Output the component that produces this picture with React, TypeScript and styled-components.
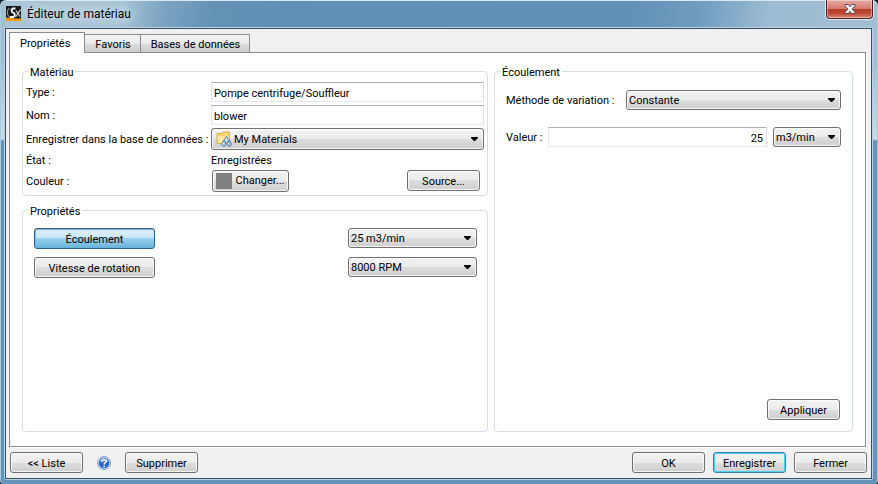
import React, { useState } from "react";
import styled, { createGlobalStyle, css } from "styled-components";

const FONT = `Tahoma, Roboto, "Liberation Sans", sans-serif`;

const GlobalStyle = createGlobalStyle`
  *, *::before, *::after { box-sizing: border-box; }
  body { margin: 0; background: #16283a; color: #000; font: 11px/14px ${FONT}; }
  button, input, select { font: inherit; color: inherit; margin: 0; }
`;

const Window = styled.div`
  min-height: 100vh;
  display: flex;
  flex-direction: column;
  padding: 0 5px 4px 4px;
  border-radius: 6px 6px 4px 4px;
  box-shadow: inset 0 1px 0 #dbe8f0, inset 1px 0 0 #a9cbe0, inset -1px 0 0 #a9cbe0;
  background:
    linear-gradient(180deg, #a5c0d3 0, #a0bfd4 60px, #c9dce8 139px, #6593b7 141px, #6593b7 100%) left / 5px 100% no-repeat,
    linear-gradient(180deg, #a3c0d4 0, #a0bfd4 60px, #c9dce8 139px, #6593b7 141px, #6593b7 100%) right / 6px 100% no-repeat,
    linear-gradient(100deg, #a9c4d6 0, #a9c5d8 120px, #7ea5c2 160px, #6492b5 210px, #6090b5 280px, #6291b6 calc(100% - 250px), #6f9cbe calc(100% - 180px), #9dbbd2 calc(100% - 110px), #a3bfd3 100%) top / 100% 30px no-repeat,
    #6593b7;
`;

const TitleBar = styled.header`
  display: flex;
  align-items: flex-start;
  height: 27px;
  padding-left: 2px;
`;

const Title = styled.h1`
  margin: 6px 0 0 6px;
  font-size: 12px;
  line-height: 16px;
  font-weight: 400;
  flex: 1;
  text-shadow: 0 0 8px #d5e4ee, 0 0 10px #d5e4ee, 0 0 12px #c5d9e6;
`;

const AppIcon = styled.svg`
  margin-top: 6px;
  width: 15px;
  height: 15px;
`;

const CloseButton = styled.button`
  width: 47px;
  height: 19px;
  padding: 0;
  display: grid;
  place-items: center;
  border: 1px solid #4b1d1f;
  border-top: 0;
  border-radius: 0 0 4px 4px;
  background: linear-gradient(180deg, #e3aaa1 0, #d3796c 50%, #b93a26 50%, #bf4a35 75%, #d98a78 100%);
  box-shadow: inset 0 0 0 1px #ffffff66, 0 1px 0 #dfeaf1, 1px 0 0 #dfeaf1, -1px 0 0 #dfeaf1;
`;

const Client = styled.main`
  flex: 1;
  display: flex;
  flex-direction: column;
  border: 1px solid #b5d3e5;
  border-radius: 2px;
`;

const ClientBody = styled.div`
  flex: 1;
  display: flex;
  flex-direction: column;
  border: 1px solid #3a4e63;
  background: #f0f0f0;
  padding: 3px 4px 5px;
`;

const TabList = styled.div`
  display: flex;
  align-items: flex-end;
  margin-left: -1px;
  height: 20px;
`;

const Tab = styled.button<{ $active: boolean }>`
  height: 18px;
  padding: 2px 9px 0 10px;
  border: 1px solid #898c95;
  border-width: 1px 1px 0;
  margin-right: -1px;
  background: linear-gradient(180deg, #f3f3f3 0, #ebebeb 50%, #dddddd 50%, #cdcdcd 100%);
  ${(p) =>
    p.$active &&
    css`
      height: 21px;
      margin-bottom: -1px;
      padding: 1px 14px 0 10px;
      background: #fff;
      position: relative;
      z-index: 1;
    `}
`;

const TabPanel = styled.section`
  flex: 1;
  margin: 0 1px 5px -1px;
  border: 1px solid #898c95;
  box-shadow: 1px 1px 0 #fff;
  background: #fff;
  padding: 12px 12px 14px;
  display: grid;
  grid-template-columns: minmax(0, 466fr) minmax(0, 359fr);
  column-gap: 6px;
`;

const Column = styled.div`
  display: flex;
  flex-direction: column;
  gap: 8px;
`;

const Group = styled.fieldset<{ $pad: string; $grow?: boolean }>`
  margin: 0;
  min-width: 0;
  border: 1px solid #d5dfe9;
  border-radius: 4px;
  padding: ${(p) => p.$pad};
  flex: ${(p) => (p.$grow ? "1 1 auto" : "0 0 auto")};
  display: flex;
  flex-direction: column;
`;

const Legend = styled.legend<{ $indent: number }>`
  margin-left: ${(p) => p.$indent}px;
  padding: 2px 2px 0;
  line-height: 11px;
`;

const FormGrid = styled.div`
  display: grid;
  grid-template-columns: 185px minmax(0, 1fr);
  row-gap: 3px;
  align-items: center;
`;

const Label = styled.label`
  white-space: nowrap;
  line-height: 12px;
  padding-top: 2px;
`;

const StateText = styled.output`
  line-height: 12px;
  padding-top: 2px;
`;

const TextField = styled.input`
  width: 100%;
  min-width: 0;
  height: 20px;
  padding: 2px 2px 0;
  border: 1px solid #e2e3ea;
  border-color: #abadb3 #dbdfe6 #e3e9ef #e2e3ea;
  border-radius: 1px;
  background: #fff;
  outline: none;
`;

const NumberField = styled(TextField)`
  text-align: right;
  padding-right: 3px;
`;

const face = css`
  border: 1px solid #707070;
  border-radius: 3px;
  background: linear-gradient(180deg, #f2f2f2 0, #ebebeb 50%, #dddddd 50%, #cfcfcf 100%);
  box-shadow: inset 0 0 0 1px #fcfcfccc;
`;

const ComboFrame = styled.div<{ $width?: number; $height?: number }>`
  ${face}
  height: ${(p) => p.$height ?? 20}px;
  width: ${(p) => (p.$width ? `${p.$width}px` : "auto")};
  min-width: 0;
  display: flex;
  align-items: center;
  padding: 0 5px 0 2px;
`;

const NativeSelect = styled.select`
  appearance: none;
  flex: 1;
  min-width: 0;
  height: 100%;
  padding: 1px 0 0;
  border: 0;
  background: transparent;
  outline: none;
`;

const Arrow = styled.svg`
  width: 7px;
  height: 4px;
  pointer-events: none;
`;

type Tone = "plain" | "selected" | "default";

const PushButton = styled.button<{ $width?: number; $height?: number; $tone?: Tone }>`
  ${face}
  width: ${(p) => p.$width ?? 73}px;
  height: ${(p) => p.$height ?? 21}px;
  padding: 2px 0 0;
  display: flex;
  align-items: center;
  justify-content: center;
  gap: 3px;
  ${(p) =>
    p.$tone === "selected" &&
    css`
      border-color: #2c628b;
      background: linear-gradient(180deg, #e3f3fb 0, #c4e5f6 50%, #98d1ef 50%, #68b3db 100%);
      box-shadow: inset 0 1px 1px #7ba9c4, inset 1px 0 0 #8fbbd5;
    `}
  ${(p) =>
    p.$tone === "default" &&
    css`
      border-color: #3c7fb1;
      box-shadow: inset 0 0 0 1px #48d0f5;
    `}
`;

const SwatchButton = styled(PushButton)`
  padding: 0;
`;

const Swatch = styled.span`
  width: 16px;
  height: 16px;
  background: #808080;
`;

const ButtonRow = styled.div`
  display: flex;
  justify-content: space-between;
  padding: 0 4px 0 1px;
`;

const PropertyList = styled.div`
  display: flex;
  flex-direction: column;
  gap: 8px;
`;

const PropertyRow = styled.div`
  display: flex;
  justify-content: space-between;
  align-items: flex-start;
`;

const FlowRow = styled.div<{ $columns: string }>`
  display: grid;
  grid-template-columns: ${(p) => p.$columns};
  align-items: center;
  margin-bottom: 17px;
`;

const ValueEntry = styled.div`
  display: grid;
  grid-template-columns: minmax(0, 1fr) 68px;
  column-gap: 6px;
`;

const ApplyRow = styled.div`
  display: flex;
  justify-content: flex-end;
  margin-top: auto;
  padding-right: 1px;
`;

const Footer = styled.footer`
  display: flex;
  align-items: center;
  justify-content: space-between;
`;

const Cluster = styled.div<{ $gap: number }>`
  display: flex;
  align-items: center;
  gap: ${(p) => p.$gap}px;
`;

const HelpButton = styled.button`
  width: 14px;
  height: 14px;
  padding: 0;
  border: 0;
  background: none;
  display: block;
`;

interface ComboProps {
  id?: string;
  label?: string;
  value: string;
  width?: number;
  height?: number;
  icon?: React.ReactNode;
}

function Combo({ id, label, value, width, height, icon }: ComboProps) {
  return (
    <ComboFrame $width={width} $height={height}>
      {icon}
      <NativeSelect id={id} aria-label={label} defaultValue={value}>
        <option>{value}</option>
      </NativeSelect>
      <Arrow viewBox="0 0 7 4" aria-hidden="true">
        <path d="M0 0h7v1L4 4H3L0 1z" />
      </Arrow>
    </ComboFrame>
  );
}

const FolderIcon = styled(function FolderSvg({ className }: { className?: string }) {
  return (
    <svg className={className} viewBox="0 0 16 16" aria-hidden="true">
      <path d="M1 2.500h5l1-1.500h6.500v11.500H1z" fill="#f3d27a" stroke="#d9b153" />
      <path d="M2 5h11v7H2z" fill="#fae7a2" />
      <path d="M10.500 5 12.500 8.700a2.200 2.200 0 1 1-4 0z" fill="#b9cfe6" stroke="#5c80a8" strokeWidth=".8" />
      <path d="M8 8.700 9.900 12.300a2.100 2.100 0 1 1-3.800 0z" fill="#a7c2df" stroke="#4d739e" strokeWidth=".8" />
      <path d="M13.200 8.700 15.100 12.300a2.100 2.100 0 1 1-3.800 0z" fill="#8fb0d3" stroke="#4d739e" strokeWidth=".8" />
      <circle cx="7.400" cy="12.800" r=".8" fill="#fff" />
      <circle cx="12.600" cy="12.800" r=".8" fill="#fff" />
      <circle cx="9.900" cy="9" r=".8" fill="#fff" />
    </svg>
  );
})`
  width: 16px;
  height: 16px;
  margin: 0 2px;
  flex: none;
`;

const TABS = ["Propriétés", "Favoris", "Bases de données"];

const PROPERTIES = [
  { name: "Écoulement", value: "25 m3/min" },
  { name: "Vitesse de rotation", value: "8000 RPM" },
];

export default function App() {
  const [tab, setTab] = useState(TABS[0]);
  const [property, setProperty] = useState(PROPERTIES[0].name);

  return (
    <>
      <GlobalStyle />
      <Window>
        <TitleBar>
          <AppIcon viewBox="0 0 15 15" aria-hidden="true">
            <rect width="15" height="15" fill="#17181a" />
            <path d="M0 11.500h6l2 1h7V15H0z" fill="#f39a12" />
            <path d="M3.500 2 1.500 4.500v4L3.500 11" fill="none" stroke="#8d8d8d" strokeWidth="1.200" />
            <path d="M9.500 2.500H6.800L5.500 4l.5 2 2.500 1.500.3 2L7.500 11H4" fill="none" stroke="#fff" strokeWidth="1.800" />
            <path d="M10 4.500l4 6M14.500 3.500l-5 7.500" fill="none" stroke="#c9c9c9" strokeWidth="1.300" />
          </AppIcon>
          <Title>Éditeur de matériau</Title>
          <CloseButton aria-label="Fermer la fenêtre">
            <svg width="12" height="10" viewBox="0 0 12 10" aria-hidden="true">
              <path
                d="M1 .5h3.200L6 2.600 7.800.5H11v1.200L8.200 5 11 8.300v1.200H7.800L6 7.400 4.200 9.500H1V8.300L3.800 5 1 1.700z"
                fill="#f5f5f5"
                stroke="#4c4f66"
              />
            </svg>
          </CloseButton>
        </TitleBar>
        <Client>
          <ClientBody>
            <TabList role="tablist">
              {TABS.map((name) => (
                <Tab key={name} role="tab" aria-selected={tab === name} $active={tab === name} onClick={() => setTab(name)}>
                  {name}
                </Tab>
              ))}
            </TabList>
            <TabPanel role="tabpanel">
              <Column>
                <Group $pad="4px 3px 3px">
                  <Legend $indent={2}>Matériau</Legend>
                  <FormGrid>
                    <Label htmlFor="type">Type :</Label>
                    <TextField id="type" defaultValue="Pompe centrifuge/Souffleur" />
                    <Label htmlFor="nom">Nom :</Label>
                    <TextField id="nom" defaultValue="blower" />
                    <Label htmlFor="base">Enregistrer dans la base de données :</Label>
                    <Combo id="base" value="My Materials" height={22} icon={<FolderIcon />} />
                    <Label htmlFor="etat">État :</Label>
                    <StateText id="etat">Enregistrées</StateText>
                    <Label htmlFor="couleur">Couleur :</Label>
                    <ButtonRow>
                      <SwatchButton id="couleur" $width={77} $height={22}>
                        <Swatch />
                        Changer...
                      </SwatchButton>
                      <PushButton>Source...</PushButton>
                    </ButtonRow>
                  </FormGrid>
                </Group>
                <Group $pad="11px 10px 11px 11px" $grow>
                  <Legend $indent={-6}>Propriétés</Legend>
                  <PropertyList>
                    {PROPERTIES.map((p) => (
                      <PropertyRow key={p.name}>
                        <PushButton
                          $width={121}
                          $tone={property === p.name ? "selected" : "plain"}
                          aria-pressed={property === p.name}
                          onClick={() => setProperty(p.name)}
                        >
                          {p.name}
                        </PushButton>
                        <Combo label={p.name} value={p.value} width={129} />
                      </PropertyRow>
                    ))}
                  </PropertyList>
                </Group>
              </Column>
              <Group $pad="12px 11px 11px" $grow>
                <Legend $indent={-6}>Écoulement</Legend>
                <FlowRow $columns="120px minmax(0, 1fr)">
                  <Label htmlFor="methode">Méthode de variation :</Label>
                  <Combo id="methode" value="Constante" />
                </FlowRow>
                <FlowRow $columns="42px minmax(0, 1fr)">
                  <Label htmlFor="valeur">Valeur :</Label>
                  <ValueEntry>
                    <NumberField id="valeur" defaultValue="25" />
                    <Combo label="Unité" value="m3/min" />
                  </ValueEntry>
                </FlowRow>
                <ApplyRow>
                  <PushButton>Appliquer</PushButton>
                </ApplyRow>
              </Group>
            </TabPanel>
            <Footer>
              <Cluster $gap={14}>
                <PushButton>&lt;&lt; Liste</PushButton>
                <HelpButton aria-label="Aide">
                  <svg width="14" height="14" viewBox="0 0 14 14" aria-hidden="true">
                    <circle cx="7" cy="7" r="6.500" fill="#dfe9f7" stroke="#7d9fd0" />
                    <circle cx="7" cy="7" r="5.300" fill="#2a66d0" />
                    <path d="M2.500 5.500a4.800 4.800 0 0 1 9 0Q7 7.500 2.500 5.500z" fill="#6a9bea" />
                    <path d="M5 5.400C5 3 9.200 3 9.200 5.300 9.200 6.800 7.200 6.800 7.200 8.500" fill="none" stroke="#fff" strokeWidth="1.500" />
                    <circle cx="7.200" cy="10.300" r=".9" fill="#fff" />
                  </svg>
                </HelpButton>
                <PushButton>Supprimer</PushButton>
              </Cluster>
              <Cluster $gap={8}>
                <PushButton>OK</PushButton>
                <PushButton $tone="default">Enregistrer</PushButton>
                <PushButton>Fermer</PushButton>
              </Cluster>
            </Footer>
          </ClientBody>
        </Client>
      </Window>
    </>
  );
}
